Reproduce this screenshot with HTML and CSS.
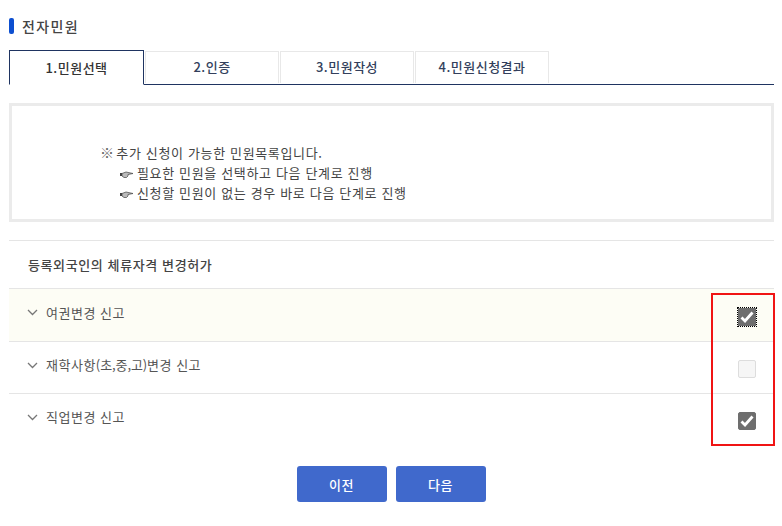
FILE: index.html
```html
<!DOCTYPE html>
<html lang="ko">
<head>
  <meta charset="utf-8">
  <title>전자민원</title>
  <link rel="stylesheet" href="styles.css">
</head>
<body>
  <h1 class="title">전자민원</h1>

  <ul class="tabs">
    <li class="tab active">1.민원선택</li>
    <li class="tab">2.인증</li>
    <li class="tab">3.민원작성</li>
    <li class="tab">4.민원신청결과</li>
  </ul>

  <div class="notice">
    <p><span class="mark">※</span> 추가 신청이 가능한 민원목록입니다.</p>
    <p class="sub"><svg class="hand" width="13" height="7" viewBox="0 0 13 7"><path d="M0 2h2v3H0z" fill="#444"/><path d="M2 2.5L6 1l7 1.5-5 1v1.5L6.500 6.500H4L2 5z" fill="#bbb" stroke="#444" stroke-width=".7"/></svg>필요한 민원을 선택하고 다음 단계로 진행</p>
    <p class="sub"><svg class="hand" width="13" height="7" viewBox="0 0 13 7"><path d="M0 2h2v3H0z" fill="#444"/><path d="M2 2.5L6 1l7 1.5-5 1v1.5L6.500 6.500H4L2 5z" fill="#bbb" stroke="#444" stroke-width=".7"/></svg>신청할 민원이 없는 경우 바로 다음 단계로 진행</p>
  </div>

  <div class="list">
    <h2 class="list-title">등록외국인의 체류자격 변경허가</h2>

    <div class="row current">
      <svg class="arrow" width="11" height="7" viewBox="0 0 11 7"><path d="M1 1l4.500 4.500L10 1" fill="none" stroke="#777" stroke-width="1.300"/></svg>
      <span class="row-name">여권변경 신고</span>
      <span class="check on focus"><svg width="14" height="12" viewBox="0 0 14 12"><path d="M1.500 6.500l3.500 3.500 7.500-8.500" fill="none" stroke="#fff" stroke-width="2.800"/></svg></span>
    </div>
    <div class="row">
      <svg class="arrow" width="11" height="7" viewBox="0 0 11 7"><path d="M1 1l4.500 4.500L10 1" fill="none" stroke="#777" stroke-width="1.300"/></svg>
      <span class="row-name">재학사항<span class="tight">(초,중,고)</span>변경 신고</span>
      <span class="check"></span>
    </div>
    <div class="row">
      <svg class="arrow" width="11" height="7" viewBox="0 0 11 7"><path d="M1 1l4.500 4.500L10 1" fill="none" stroke="#777" stroke-width="1.300"/></svg>
      <span class="row-name">직업변경 신고</span>
      <span class="check on"><svg width="14" height="12" viewBox="0 0 14 12"><path d="M1.500 6.500l3.500 3.500 7.500-8.500" fill="none" stroke="#fff" stroke-width="2.800"/></svg></span>
    </div>

    <div class="red-box"></div>
  </div>

  <div class="buttons">
    <button class="btn">이전</button>
    <button class="btn">다음</button>
  </div>
</body>
</html>
```

FILE: styles.css
```css
body {
  margin: 0;
  padding: 17px 8px 0 9px;
  font-family: "Noto Sans CJK KR", "Noto Sans", sans-serif;
  font-size: 13px;
  color: #444;
  background: #fff;
}
.title {
  display: flex;
  align-items: center;
  height: 17px;
  margin: 0 0 16px;
  font-size: 14px;
  font-weight: 500;
  letter-spacing: 1.4px;
  color: #444;
}
.title::before {
  content: "";
  width: 5px;
  height: 16px;
  margin-right: 8px;
  border-radius: 2px;
  background: #0d4fd0;
}
.tabs {
  display: flex;
  gap: 1px;
  align-items: flex-end;
  height: 35px;
  margin: 0;
  padding: 0;
  list-style: none;
  border-bottom: 1px solid #1f3461;
  box-sizing: border-box;
}
.tab {
  box-sizing: border-box;
  width: 134px;
  height: 32px;
  margin-bottom: 1px;
  border: 1px solid #e8e8e8;
  border-bottom: none;
  line-height: 30px;
  letter-spacing: 0.5px;
  text-align: center;
  font-weight: 500;
  color: #333f5c;
}
.tab.active {
  width: 135px;
  height: 35px;
  margin-bottom: -1px;
  border: 1px solid #1f3461;
  border-bottom: 1px solid #fff;
  line-height: 33px;
  color: #333;
}
.notice {
  box-sizing: border-box;
  height: 119px;
  margin-top: 18px;
  padding: 37px 0 0 88px;
  border: 3px solid #ebebeb;
  line-height: 20px;
  letter-spacing: 0.65px;
  color: #444;
}
.notice p {
  height: 20px;
  margin: 0;
}
.notice .sub {
  padding-left: 20px;
}
.mark {
  font-size: 14px;
  line-height: 1;
  letter-spacing: -2px;
  color: #666;
}
.hand {
  margin-right: 4px;
}
.list {
  position: relative;
  margin-top: 18px;
  border-top: 1px solid #e5e5e5;
}
.list-title {
  height: 47px;
  margin: 0;
  padding: 0 0 0 19px;
  font-size: 13px;
  font-weight: 500;
  line-height: 47px;
  letter-spacing: 0.6px;
  color: #444;
}
.row {
  display: flex;
  align-items: center;
  box-sizing: border-box;
  height: 52px;
  padding: 0 18px 0 18px;
  border-top: 1px solid #e5e5e5;
}
.row.current {
  height: 53px;
  background: #fdfdf5;
}
.row:last-of-type {
  height: 53px;
  border-bottom: 1px solid #e5e5e5;
}
.arrow {
  margin: -5px 8px 0 0;
}
.row-name {
  flex: 1;
  margin-top: -6px;
  letter-spacing: 0.5px;
  color: #555;
}
.tight {
  letter-spacing: -0.1px;
}
.check {
  display: flex;
  align-items: center;
  justify-content: center;
  box-sizing: border-box;
  width: 18px;
  height: 18px;
  margin-top: 3px;
  border: 1px solid #ddd;
  border-radius: 2px;
  background: #f6f6f6;
}
.check.on {
  border-color: #6e6e6e;
  background: #6e6e6e;
}
.check.focus {
  border-radius: 0;
  outline: 1px dotted #000;
}
.red-box {
  position: absolute;
  top: 52px;
  right: -1px;
  width: 60px;
  height: 149px;
  border: 2px solid #f01414;
}
.buttons {
  display: flex;
  justify-content: center;
  gap: 9px;
  margin-top: 21px;
  padding-right: 1px;
}
.btn {
  width: 90px;
  height: 36px;
  padding: 0;
  border: none;
  border-radius: 3px;
  background: #4069cc;
  color: #fff;
  font-family: inherit;
  font-size: 13px;
  font-weight: 500;
  letter-spacing: 0.5px;
}
```
